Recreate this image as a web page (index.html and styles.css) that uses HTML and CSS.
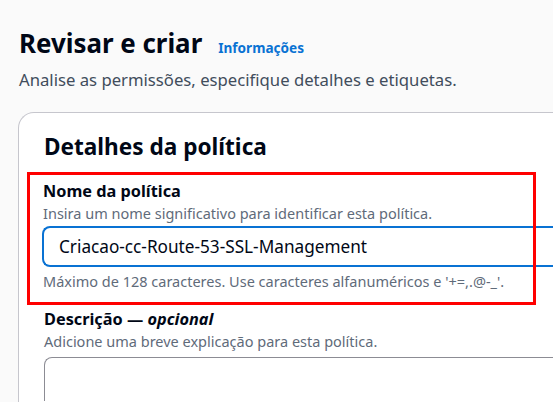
FILE: index.html
```html
<!DOCTYPE html>
<html lang="pt">
<head>
<meta charset="utf-8">
<link rel="stylesheet" href="styles.css">
</head>
<body>
<div class="page">
  <header class="header">
    <div class="title-row">
      <h1 class="title">Revisar e criar</h1>
      <a class="info" href="#">Informações</a>
    </div>
    <p class="subtitle">Analise as permissões, especifique detalhes e etiquetas.</p>
  </header>
  <section class="card">
    <h2 class="card-title">Detalhes da política</h2>
    <div class="highlight">
      <div class="field">
        <div class="label">Nome da política</div>
        <div class="desc">Insira um nome significativo para identificar esta política.</div>
        <div class="input">Criacao-cc-Route-53-SSL-Management</div>
        <div class="constraint">Máximo de 128 caracteres. Use caracteres alfanuméricos e '+=,.@-_'.</div>
      </div>
    </div>
    <div class="field field-desc">
      <div class="label">Descrição — <i>opcional</i></div>
      <div class="desc">Adicione uma breve explicação para esta política.</div>
      <div class="textarea"></div>
    </div>
  </section>
</div>
</body>
</html>
```
FILE: styles.css
```css
html, body {
  margin: 0;
  padding: 0;
  background: #fafafa;
  overflow: hidden;
}
body {
  font-family: "Noto Sans", "Open Sans", sans-serif;
  color: #000716;
  width: 553px;
  height: 402px;
}
.page {
  padding: 26px 0 0 19px;
  height: 402px;
  box-sizing: border-box;
}
.title-row {
  display: flex;
  align-items: baseline;
  gap: 16px;
}
.title {
  margin: 0;
  font-size: 25.9px;
  font-weight: 700;
  line-height: 34px;
}
.info {
  color: #0972d3;
  font-weight: 700;
  font-size: 13.6px;
  text-decoration: none;
}
.subtitle {
  margin: 8.5px 0 0;
  font-size: 16.7px;
  line-height: 22px;
  color: #414d5c;
}
.card {
  margin: 21.5px 0 0 -1px;
  width: 535px;
  height: 290px;
  box-sizing: border-box;
  background: #fff;
  border: 1px solid #c6c6cd;
  border-right: none;
  border-bottom: none;
  border-radius: 16px 0 0 0;
  padding: 19px 0 0 25px;
}
.card-title {
  margin: 0;
  font-size: 22.6px;
  line-height: 30px;
  font-weight: 700;
}
.highlight {
  position: relative;
  margin: 9.5px 0 0 -17px;
  width: 509px;
  height: 133px;
  box-sizing: border-box;
  padding: 8px 0 0 16px;
}
.highlight::after {
  content: "";
  position: absolute;
  inset: 0;
  border: 3px solid #ff0000;
  pointer-events: none;
}
.label {
  font-size: 16.3px;
  font-weight: 700;
  line-height: 22px;
}
.label i {
  font-weight: 700;
}
.desc, .constraint {
  font-size: 14.5px;
  line-height: 20px;
  color: #5f6b7a;
}
.highlight .desc {
  margin-top: 1px;
}
.input {
  margin: 3.5px 0 0 -1px;
  width: 511px;
  height: 41px;
  box-sizing: border-box;
  border: 2px solid #0972d3;
  border-right: none;
  border-radius: 8px 0 0 8px;
  padding: 0 0 0 15px;
  display: flex;
  align-items: center;
  font-size: 17.2px;
  color: #000716;
  white-space: nowrap;
}
.constraint {
  margin-top: 4.4px;
}
.field-desc {
  margin-top: 3.7px;
}
.field-desc .desc {
  margin-top: 1px;
}
.textarea {
  margin-top: 6.3px;
  width: 509px;
  height: 44px;
  box-sizing: border-box;
  border: 1px solid #8c8c94;
  border-right: none;
  border-bottom: none;
  border-radius: 8px 0 0 0;
}
```
